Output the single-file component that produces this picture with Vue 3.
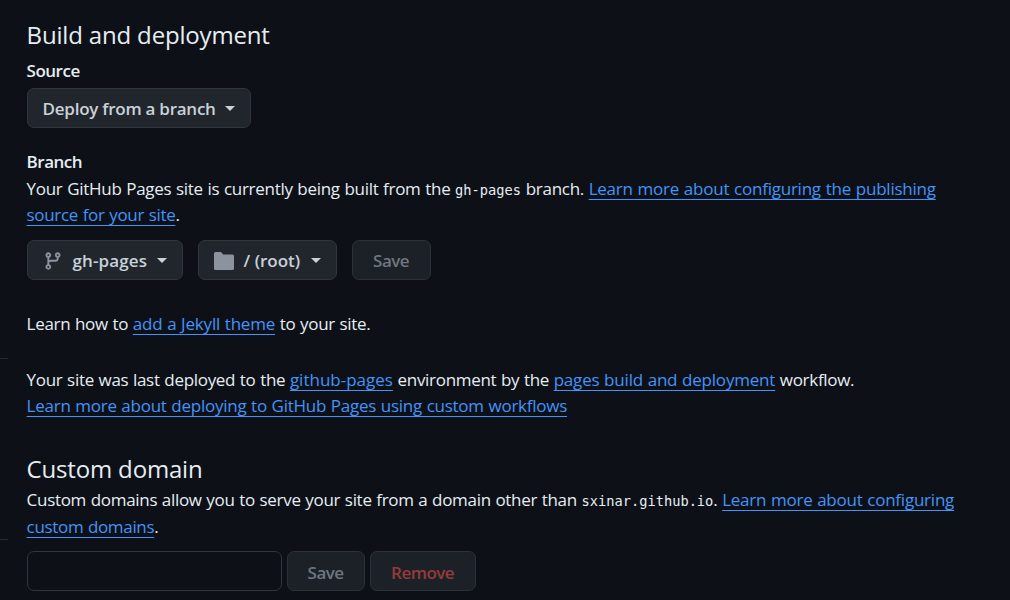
<template>
  <div class="page">
    <aside class="rail">
      <span class="rail-line"></span>
      <span class="rail-line"></span>
    </aside>

    <main class="content">
      <h2 class="title">Build and deployment</h2>

      <h4 class="label source-label">Source</h4>
      <button class="btn btn-source" type="button">
        <span class="text-source">Deploy from a branch</span>
        <span class="caret"></span>
      </button>

      <h4 class="label branch-label">Branch</h4>
      <p class="text branch-text">
        Your GitHub Pages site is currently being built from the <code>gh-pages</code> branch. <a href="#">Learn more about configuring the publishing<br /><span class="tight">source for your site</span></a>.
      </p>

      <div class="row branch-row">
        <button class="btn btn-branch" type="button">
          <svg class="icon" width="20" height="20" viewBox="0 0 16 16" fill="currentColor">
            <path d="M9.5 3.25a2.25 2.25 0 1 1 3 2.122V6A2.5 2.5 0 0 1 10 8.5H6a1 1 0 0 0-1 1v1.128a2.251 2.251 0 1 1-1.5 0V5.372a2.25 2.25 0 1 1 1.5 0v1.836A2.493 2.493 0 0 1 6 7h4a1 1 0 0 0 1-1v-.628A2.25 2.25 0 0 1 9.5 3.25Zm-6 0a.75.75 0 1 0 1.5 0 .75.75 0 0 0-1.5 0Zm8.25-.75a.75.75 0 1 0 0 1.5.75.75 0 0 0 0-1.5ZM4.25 12a.75.75 0 1 0 0 1.5.75.75 0 0 0 0-1.5Z" />
          </svg>
          <span class="text-branch">gh-pages</span>
          <span class="caret"></span>
        </button>
        <button class="btn btn-folder" type="button">
          <svg class="icon folder" width="22" height="20" viewBox="0 0 22 20" fill="currentColor">
            <path d="M2.500 1h5c.7 0 1.200.3 1.500.9l.6 1.200c.2.300.400.400.700.400H19.500a1.500 1.500 0 0 1 1.500 1.500V17.500a1.500 1.500 0 0 1-1.500 1.500H2.500a1.500 1.500 0 0 1-1.500-1.500V2.500a1.500 1.500 0 0 1 1.500-1.500Z" />
          </svg>
          <span class="text-folder">/ (root)</span>
          <span class="caret"></span>
        </button>
        <button class="btn btn-save" type="button" disabled>Save</button>
      </div>

      <p class="text jekyll-text">
        Learn how to <a href="#">add a Jekyll theme</a> to your site.
      </p>

      <p class="text deploy-text">
        Your site was last deployed to the <a href="#" class="env">github-pages</a> environment by the
        <a href="#">pages build and deployment</a> workflow.<br />
        <a href="#" class="workflows">Learn more about deploying to GitHub Pages using custom workflows</a>
      </p>

      <h2 class="title domain-title">Custom domain</h2>
      <p class="text domain-text">
        Custom domains allow you to serve your site from a domain other than <code>sxinar.github.io</code>. <a href="#">Learn more about configuring<br /><span class="tight">custom domains</span></a>.
      </p>

      <form class="row domain-row" @submit.prevent>
        <input v-model="domain" class="domain-input" type="text" aria-label="Custom domain" />
        <button class="btn btn-save-domain" type="submit" disabled>Save</button>
        <button class="btn btn-danger" type="button" disabled>Remove</button>
      </form>
    </main>
  </div>
</template>

<script setup>
import { ref } from 'vue'

const domain = ref('')
</script>

<style>
body {
  margin: 0;
  background: #0d1117;
}
</style>

<style scoped>
* {
  box-sizing: border-box;
}

.page {
  display: flex;
  gap: 18.6px;
  height: 600px;
  overflow: hidden;
  background: #0d1117;
  color: #e6edf3;
  font-family: "Open Sans", "Noto Sans", sans-serif;
  font-size: 17px;
  line-height: 26px;
}

.rail {
  display: flex;
  flex-direction: column;
  gap: 180px;
  width: 8px;
  padding-top: 358px;
}

.rail-line {
  flex: none;
  height: 1px;
  background: #252a31;
}

.content {
  flex: 1;
  padding-top: 17px;
  white-space: nowrap;
}

.title {
  margin: 0;
  font-size: 24px;
  font-weight: 400;
  line-height: 36px;
  letter-spacing: -0.17px;
}

.label {
  margin: 0;
  font-size: 17px;
  font-weight: 600;
  line-height: 26px;
  letter-spacing: -0.5px;
}

.source-label {
  margin-top: 5px;
}

.branch-label {
  margin-top: 21px;
}

.text {
  margin: 0;
  letter-spacing: -0.3px;
  word-spacing: 0.5px;
}

.branch-text {
  margin-top: 1px;
  word-spacing: 0.6px;
}

.domain-text {
  line-height: 26.5px;
}

code {
  font-family: "DejaVu Sans Mono", monospace;
  font-size: 13.7px;
  letter-spacing: 0;
  line-height: 1;
}

a {
  color: #4493f8;
  letter-spacing: -0.2px;
  text-decoration: underline;
  text-decoration-thickness: 1px;
  text-underline-offset: 4px;
}

.branch-text a,
.domain-text a {
  letter-spacing: -0.23px;
}

.env {
  letter-spacing: 0;
}

.workflows {
  letter-spacing: -0.25px;
}

.text .tight {
  letter-spacing: -0.33px;
}

.row {
  display: flex;
}

.branch-row {
  gap: 15px;
  margin-top: 12px;
}

.btn {
  display: flex;
  align-items: center;
  height: 40px;
  padding: 1px 15px 0;
  border: 1px solid #30363d;
  border-radius: 7px;
  background: #21262d;
  color: #c9d1d9;
  font-family: inherit;
  font-size: 17px;
  font-weight: 600;
  line-height: 26px;
  letter-spacing: -0.25px;
  white-space: nowrap;
}

.btn:disabled {
  justify-content: center;
  padding: 2px 0 0;
  border-color: #2b3138;
  background: #1c2128;
  color: #6e7681;
  letter-spacing: -0.5px;
}

.btn-source {
  width: 224px;
  margin-top: 4px;
}

.btn-branch {
  width: 156px;
}

.text-branch {
  letter-spacing: 0.1px;
}

.btn-folder {
  width: 139px;
}

.text-folder {
  letter-spacing: 0;
}

.btn-save {
  width: 79px;
}

.icon {
  flex: none;
  color: #8b949e;
}

.btn-branch .icon {
  margin-right: 10px;
}

.btn-folder .folder {
  margin-left: -1px;
  margin-right: 9px;
}

.caret {
  margin-left: auto;
  border: 5px solid transparent;
  border-top-color: currentColor;
  border-bottom-width: 0;
}

.jekyll-text {
  margin-top: 31px;
}

.deploy-text {
  margin-top: 30px;
}

.domain-title {
  margin-top: 32px;
}

.domain-row {
  gap: 5px;
  margin-top: 11px;
}

.domain-input {
  width: 255px;
  height: 40px;
  padding: 0 15px;
  border: 1px solid #30363d;
  border-radius: 7px;
  background: #0d1117;
  color: inherit;
  font: inherit;
  outline: none;
}

.btn-save-domain {
  width: 78px;
}

.btn-danger {
  width: 106px;
}

.domain-row .btn:disabled {
  padding-top: 3px;
}

.btn-danger:disabled {
  color: #973a3a;
}
</style>
